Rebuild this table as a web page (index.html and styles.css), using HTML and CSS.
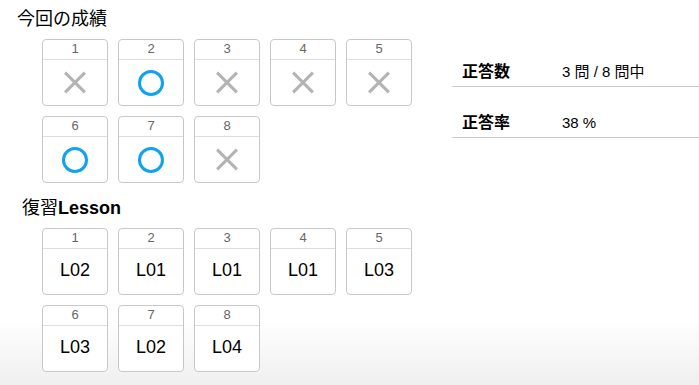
FILE: index.html
```html
<!DOCTYPE html>
<html lang="ja">
<head>
    <meta charset="UTF-8">
    <meta name="viewport" content="width=device-width, initial-scale=1.0">
    <title>今回の成績</title>
    <link rel="stylesheet" href="styles.css">
</head>
<body>
    <div class="page">
        <div class="left">
            <h2 class="title">今回の成績</h2>
            <div class="grid">
                <div class="card"><div class="num">1</div><div class="mark"><span class="ng"></span></div></div>
                <div class="card"><div class="num">2</div><div class="mark"><span class="ok"></span></div></div>
                <div class="card"><div class="num">3</div><div class="mark"><span class="ng"></span></div></div>
                <div class="card"><div class="num">4</div><div class="mark"><span class="ng"></span></div></div>
                <div class="card"><div class="num">5</div><div class="mark"><span class="ng"></span></div></div>
                <div class="card"><div class="num">6</div><div class="mark"><span class="ok"></span></div></div>
                <div class="card"><div class="num">7</div><div class="mark"><span class="ok"></span></div></div>
                <div class="card"><div class="num">8</div><div class="mark"><span class="ng"></span></div></div>
            </div>

            <h2 class="title review">復習<b>Lesson</b></h2>
            <div class="grid">
                <div class="card"><div class="num">1</div><div class="mark lesson">L02</div></div>
                <div class="card"><div class="num">2</div><div class="mark lesson">L01</div></div>
                <div class="card"><div class="num">3</div><div class="mark lesson">L01</div></div>
                <div class="card"><div class="num">4</div><div class="mark lesson">L01</div></div>
                <div class="card"><div class="num">5</div><div class="mark lesson">L03</div></div>
                <div class="card"><div class="num">6</div><div class="mark lesson">L03</div></div>
                <div class="card"><div class="num">7</div><div class="mark lesson">L02</div></div>
                <div class="card"><div class="num">8</div><div class="mark lesson">L04</div></div>
            </div>
        </div>

        <div class="stats">
            <div class="stat-row">
                <span class="stat-label">正答数</span>
                <span class="stat-value">3 問 / 8 問中</span>
            </div>
            <div class="stat-row">
                <span class="stat-label">正答率</span>
                <span class="stat-value">38 %</span>
            </div>
        </div>
    </div>
</body>
</html>
```

FILE: styles.css
```css
html {
    height: 100%;
    background: linear-gradient(to bottom, #fff 0%, #fff 83%, #efefef 100%);
}

body {
    margin: 0;
    font-family: "Liberation Sans", Arial, "Noto Sans CJK JP", sans-serif;
    color: #000;
}

.page {
    display: flex;
}

.left {
    width: 452px;
}

.title {
    margin: 0;
    padding: 7px 0 0 17px;
    font-size: 18px;
    line-height: 24px;
    font-weight: normal;
}

.title.review {
    padding: 13px 0 0 22px;
}

.grid {
    display: flex;
    flex-wrap: wrap;
    gap: 10px;
    width: 380px;
    margin: 8px 0 0 42px;
}

.card {
    width: 66px;
    height: 67px;
    box-sizing: border-box;
    border: 1px solid #c8c8c8;
    border-radius: 4px;
    display: flex;
    flex-direction: column;
    background: #fff;
}

.num {
    height: 19px;
    line-height: 18px;
    border-bottom: 1px solid #dedede;
    text-align: center;
    font-size: 13px;
    color: #666;
}

.mark {
    flex: 1;
    display: flex;
    align-items: center;
    justify-content: center;
}

.mark.lesson {
    font-size: 18px;
    padding-bottom: 2px;
}

/* 正解: blue ring */
.ok {
    width: 20px;
    height: 20px;
    border: 3.5px solid #10a2f2;
    border-radius: 50%;
}

/* 不正解: grey cross */
.ng {
    position: relative;
    width: 24px;
    height: 24px;
}

.ng::before,
.ng::after {
    content: "";
    position: absolute;
    left: -2px;
    top: 10.5px;
    width: 28px;
    height: 3px;
    background: #b3b3b3;
    transform: rotate(45deg);
}

.ng::after {
    transform: rotate(-45deg);
}

.stats {
    flex: 1;
    margin-top: 36px;
}

.stat-row {
    display: flex;
    align-items: flex-end;
    height: 51px;
    box-sizing: border-box;
    padding: 0 0 6px 10px;
    border-bottom: 1px solid #cccccc;
    line-height: 17px;
}

.stat-label {
    width: 100px;
    font-size: 16px;
    font-weight: bold;
}

.stat-value {
    font-size: 15px;
}
```
